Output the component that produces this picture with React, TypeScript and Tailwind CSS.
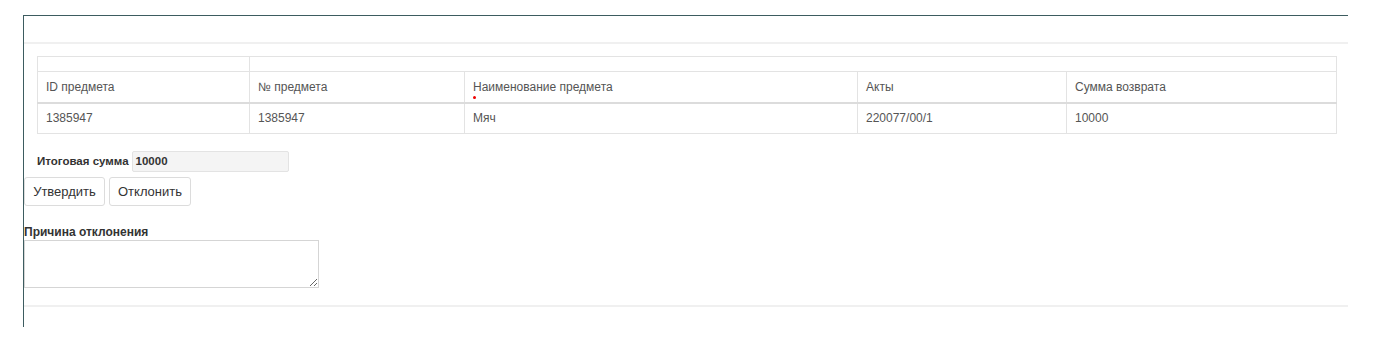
import React from "react";

export default function App() {
  const cell = "border border-[#e3e3e3] px-[8px] text-left font-normal align-middle";
  return (
    <div className="w-[1387px] h-[348px] bg-white text-[12px] text-[#555]" style={{ fontFamily: '"Liberation Sans", Arial, sans-serif' }}>
      <div className="pt-[15px] pl-[23px]">
        <div className="w-[1325px] h-[312px] border-l border-t border-[#3d5c60] flex flex-col">
          <div className="h-[28px] border-b-[2px] border-[#f0f0f0]" />
          <div className="pt-[12px] pl-[13px]">
            <table className="border-collapse w-[1299px] table-fixed">
              <colgroup>
                <col className="w-[212px]" />
                <col className="w-[215px]" />
                <col className="w-[393px]" />
                <col className="w-[209px]" />
                <col className="w-[270px]" />
              </colgroup>
              <thead>
                <tr className="h-[15px]">
                  <th className={cell}></th>
                  <th className={cell} colSpan={4}></th>
                </tr>
                <tr className="h-[31px]">
                  <th className={cell + " border-b-[2px] border-b-[#dcdcdc]"}>ID предмета</th>
                  <th className={cell + " border-b-[2px] border-b-[#dcdcdc]"}>№ предмета</th>
                  <th className={cell + " border-b-[2px] border-b-[#dcdcdc] relative"}>
                    Наименование предмета
                    <span className="absolute left-[8px] top-[24px] w-[3px] h-[3px] rounded-full bg-[#e00]" />
                  </th>
                  <th className={cell + " border-b-[2px] border-b-[#dcdcdc]"}>Акты</th>
                  <th className={cell + " border-b-[2px] border-b-[#dcdcdc]"}>Сумма возврата</th>
                </tr>
              </thead>
              <tbody>
                <tr className="h-[31px]">
                  <td className={cell}>1385947</td>
                  <td className={cell}>1385947</td>
                  <td className={cell}>Мяч</td>
                  <td className={cell}>220077/00/1</td>
                  <td className={cell}>10000</td>
                </tr>
              </tbody>
            </table>
          </div>
          <div className="pl-[13px] pt-[17px] flex items-center gap-[3px]">
            <span className="font-bold text-[#333] text-[11.5px]">Итоговая сумма</span>
            <div className="w-[157px] h-[21px] bg-[#f4f4f4] border border-[#e3e3e3] rounded-[2px] pl-[3px] flex items-center font-bold text-[#333] text-[11.5px]">10000</div>
          </div>
          <div className="flex gap-[4px] pt-[5px]">
            <button className="w-[81px] h-[29px] border border-[#dcdcdc] rounded-[3px] bg-white text-[13px] text-[#333]">Утвердить</button>
            <button className="w-[82px] h-[29px] border border-[#dcdcdc] rounded-[3px] bg-white text-[13px] text-[#333]">Отклонить</button>
          </div>
          <div className="pt-[19px] font-bold text-[#333] leading-[14px]">Причина отклонения</div>
          <textarea className="mt-[1px] w-[295px] h-[48px] border border-[#d5d5d5] resize block" />
          <div className="mt-[17px] border-b-[2px] border-[#f0f0f0]" />
        </div>
      </div>
    </div>
  );
}
